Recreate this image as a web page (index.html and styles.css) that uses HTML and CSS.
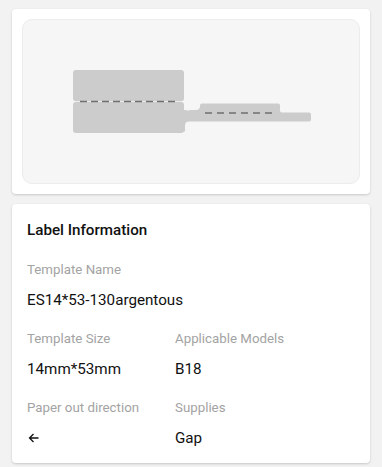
FILE: index.html
```html
<!DOCTYPE html>
<html>
<head>
<meta charset="utf-8">
<link rel="stylesheet" href="styles.css">
</head>
<body>
<div class="page">
  <section class="card preview-card">
    <div class="preview">
      <svg class="label-shape" width="238" height="64" viewBox="0 0 238 64">
        <g fill="#cccccc">
          <rect x="0" y="0" width="111" height="31.3" rx="3"/>
          <rect x="0" y="32" width="111" height="31" rx="3"/>
          <path d="M108 40 h5 a4 4 0 0 0 4 0 h6 a4 4 0 0 0 4 -4 v-0.5 a2 2 0 0 1 2 -2 h76 a2 2 0 0 1 2 2 v5 a2 2 0 0 0 2 2 h27 a2 2 0 0 1 2 2 v5 a2 2 0 0 1 -2 2 h-120 a4 4 0 0 0 -4 4 v6 h-5 z"/>
        </g>
        <line x1="7" y1="31.6" x2="106" y2="31.6" stroke="#6f6f6f" stroke-width="1.5" stroke-dasharray="7 4"/>
        <line x1="132" y1="43" x2="204" y2="43" stroke="#6f6f6f" stroke-width="1.5" stroke-dasharray="7 5"/>
      </svg>
    </div>
  </section>
  <section class="card info-card">
    <h2 class="title">Label Information</h2>
    <div class="field full">
      <div class="label">Template Name</div>
      <div class="value">ES14*53-130argentous</div>
    </div>
    <div class="grid">
      <div class="field">
        <div class="label">Template Size</div>
        <div class="value">14mm*53mm</div>
      </div>
      <div class="field">
        <div class="label">Applicable Models</div>
        <div class="value">B18</div>
      </div>
      <div class="field">
        <div class="label">Paper out direction</div>
        <div class="value">
          <svg class="arrow" width="11" height="10" viewBox="0 0 11 10"><path d="M10.5 5 H1.5 M5.5 1 L1.5 5 L5.5 9" fill="none" stroke="#111" stroke-width="1.3"/></svg>
        </div>
      </div>
      <div class="field">
        <div class="label">Supplies</div>
        <div class="value">Gap</div>
      </div>
    </div>
  </section>
</div>
</body>
</html>
```
FILE: styles.css
```css
html, body {
  margin: 0;
  padding: 0;
  background: #f2f2f2;
  font-family: Roboto, "Liberation Sans", sans-serif;
}
.page {
  padding: 9px 12px 4px;
  display: flex;
  flex-direction: column;
  gap: 10px;
}
.card {
  background: #ffffff;
  border-radius: 4px;
  box-shadow: 0 1px 3px rgba(0,0,0,0.12), 0 1px 2px rgba(0,0,0,0.06);
}
.preview-card {
  height: 185px;
  box-sizing: border-box;
  padding: 10px;
}
.preview {
  height: 165px;
  box-sizing: border-box;
  background: #f6f6f6;
  border: 1px solid #ececec;
  border-radius: 10px;
  display: flex;
  align-items: center;
  justify-content: center;
}
.label-shape {
  display: block;
  margin-left: 1px;
}
.info-card {
  height: 259px;
  box-sizing: border-box;
  padding: 16px 15px 16px;
}
.title {
  margin: 0;
  font-size: 15.2px;
  font-weight: 500;
  line-height: 20px;
  color: #111;
}
.field.full {
  margin-top: 20px;
}
.label {
  font-size: 13.3px;
  line-height: 20px;
  color: #a3a3a3;
}
.value {
  margin-top: 10px;
  font-size: 15.2px;
  line-height: 20px;
  color: #111;
  height: 20px;
  display: flex;
  align-items: center;
}
.grid {
  margin-top: 19px;
  display: grid;
  grid-template-columns: 148px 1fr;
  row-gap: 19px;
}
.arrow {
  display: block;
  margin-left: 1px;
}
```
